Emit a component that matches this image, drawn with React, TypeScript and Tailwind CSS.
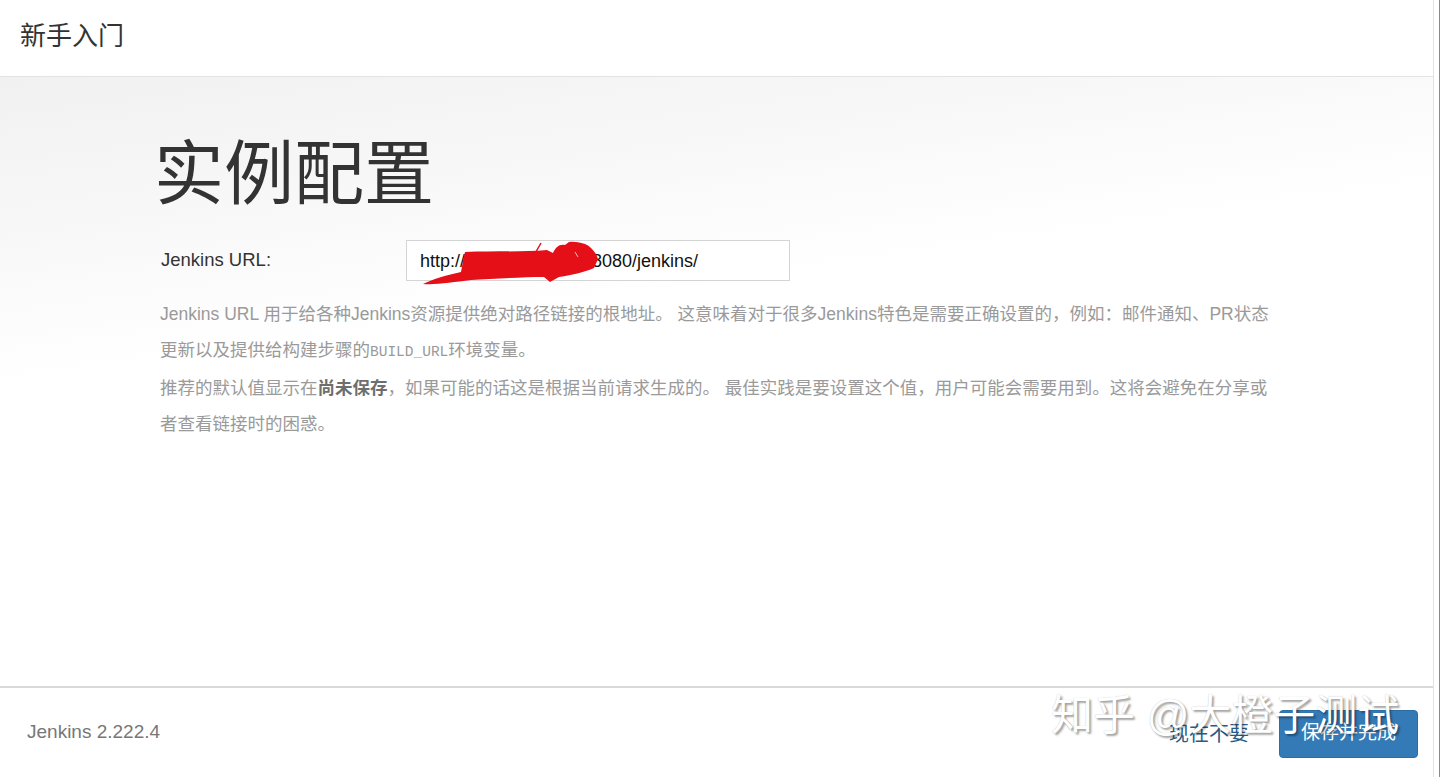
import React from "react";

const SANS = "font-['Liberation_Sans','Noto_Sans_CJK_SC',sans-serif]";

function Scribble() {
  return (
    <svg
      className="absolute left-0 top-0 pointer-events-none"
      width="200"
      height="46"
      viewBox="0 0 200 46"
      fill="none"
    >
      <path
        d="M16 43 C26 38 40 34 54 31 L56 20 L58 11 C88 10 118 11 140 9 L146 12 C149 6 152 3 158 4 L162 1 C168 0 174 2 178 3 C183 5 186 9 189 13 L191 18 L187 27 C178 31 166 34 152 36 L143 41 L137 36 C114 36 86 38 64 39 C46 41 30 44 16 43 Z"
        fill="#e50f18"
      />
      <path d="M126 16 L134 2" stroke="#e50f18" strokeWidth="1.5" />
      <path d="M168 11 L171 16" stroke="#f5b5b5" strokeWidth="1" />
    </svg>
  );
}

export default function App() {
  return (
    <div className={`w-[1440px] h-[777px] overflow-hidden bg-white flex border-r border-[#8a8a8a] ${SANS}`}>
      <div className="flex-1 flex flex-col border-r border-[#e2e2e2] mr-[5px] relative">
        {/* header */}
        <div className="h-[77px] shrink-0 flex items-center pl-[20px] border-b border-[#e3e3e3]">
          <span className="text-[26px] text-[#333] leading-none pb-[4px]">新手入门</span>
        </div>

        {/* body */}
        <div className="flex-1 bg-[linear-gradient(172deg,#f1f1f1_0%,#f7f7f7_18%,#ffffff_38%)] pl-[157px] pt-[58px]">
          <h1 className="text-[70px] leading-[80px] text-[#333] font-normal -ml-[3px]">实例配置</h1>

          <div className="flex items-start mt-[25px]">
            <div className="w-[249px] pl-[4px] pt-[9px] text-[18.5px] text-[#333] leading-[22px]">Jenkins URL:</div>
            <div className="relative w-[384px] h-[41px] border border-[#d4d4d4] bg-white flex items-center pl-[13px] text-[18px] text-[#111] leading-none">
              <span>http://</span>
              <span className="inline-block w-[127px]" />
              <span>8080/jenkins/</span>
              <Scribble />
            </div>
          </div>

          <div className="mt-[15px] pl-[3px] text-[17.5px] leading-[36px] text-[#9a9a9a] whitespace-nowrap">
            <div>
              Jenkins URL 用于给各种Jenkins资源提供绝对路径链接的根地址。 这意味着对于很多Jenkins特色是需要正确设置的，例如：邮件通知、PR状态
            </div>
            <div>
              更新以及提供给构建步骤的<span className="font-['Liberation_Mono',monospace] text-[14.5px]">BUILD_URL</span>环境变量。
            </div>
            <div>
              推荐的默认值显示在<b className="text-[#6e6e6e] font-bold">尚未保存</b>，如果可能的话这是根据当前请求生成的。 最佳实践是要设置这个值，用户可能会需要用到。这将会避免在分享或
            </div>
            <div>者查看链接时的困惑。</div>
          </div>
        </div>

        {/* footer */}
        <div className="h-[91px] shrink-0 border-t-2 border-[#d9d9d9] flex items-center justify-between pl-[27px] pr-[15px]">
          <span className="text-[19px] text-[#777]">Jenkins 2.222.4</span>
          <div className="flex items-center gap-[30px] pt-[2px]">
            <span className="text-[20px] text-[#2a5a86]">现在不要</span>
            <button className="w-[139px] h-[48px] rounded-[4px] bg-[#337ab7] border border-[#2e6da4] text-white text-[19px]">
              保存并完成
            </button>
          </div>
        </div>

        {/* watermark */}
        <div className="absolute left-[1051px] top-[695px] text-[42px] leading-none text-white whitespace-nowrap [text-shadow:2px_2px_2px_rgba(0,0,0,0.35),0_0_1px_rgba(0,0,0,0.25)] pointer-events-none">
          知乎 @大橙子测试
        </div>
      </div>
    </div>
  );
}
